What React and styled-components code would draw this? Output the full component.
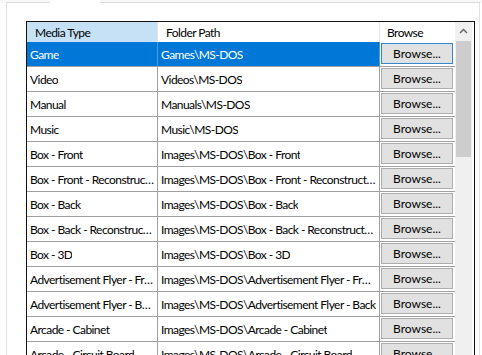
import React from 'react';
import styled, { createGlobalStyle } from 'styled-components';

const GlobalStyle = createGlobalStyle`
    html, body {
        margin: 0;
        padding: 0;
        background: #ffffff;
        overflow: hidden;
    }
    body {
        font-family: "Segoe UI", Lato, "Liberation Sans", sans-serif;
        font-size: 12px;
        letter-spacing: -0.56px;
        color: #000000;
    }
`

const rows = [
    ['Game', 'Games\\MS-DOS'],
    ['Video', 'Videos\\MS-DOS'],
    ['Manual', 'Manuals\\MS-DOS'],
    ['Music', 'Music\\MS-DOS'],
    ['Box - Front', 'Images\\MS-DOS\\Box - Front'],
    ['Box - Front - Reconstructed', 'Images\\MS-DOS\\Box - Front - Reconstructed'],
    ['Box - Back', 'Images\\MS-DOS\\Box - Back'],
    ['Box - Back - Reconstructed', 'Images\\MS-DOS\\Box - Back - Reconstructed'],
    ['Box - 3D', 'Images\\MS-DOS\\Box - 3D'],
    ['Advertisement Flyer - Front', 'Images\\MS-DOS\\Advertisement Flyer - Front'],
    ['Advertisement Flyer - Back', 'Images\\MS-DOS\\Advertisement Flyer - Back'],
    ['Arcade - Cabinet', 'Images\\MS-DOS\\Arcade - Cabinet'],
    ['Arcade - Circuit Board', 'Images\\MS-DOS\\Arcade - Circuit Board'],
];

export default function App() {
    return (
        <Page>
            <GlobalStyle />
            <TabStrip>
                <TabEdge width="44px" />
                <TabGap />
                <TabEdge grow />
            </TabStrip>
            <Panel>
                <Grid>
                    <Table>
                        <HeaderRow>
                            <HeaderCell sorted>Media Type</HeaderCell>
                            <HeaderCell>Folder Path</HeaderCell>
                            <HeaderCell last>Browse</HeaderCell>
                        </HeaderRow>
                        {rows.map(([type, path], i) => (
                            <Row key={type}>
                                <Cell selected={i === 0}><Text>{type}</Text></Cell>
                                <Cell selected={i === 0}><Text>{path}</Text></Cell>
                                <ButtonCell>
                                    <BrowseButton focused={i === 0}>Browse...</BrowseButton>
                                </ButtonCell>
                            </Row>
                        ))}
                    </Table>
                    <ScrollBar>
                        <ArrowButton>
                            <svg width="9" height="6" viewBox="0 0 9 6">
                                <path d="M1 5 L4.5 1.5 L8 5" fill="none" stroke="#606060" strokeWidth="1.4" />
                            </svg>
                        </ArrowButton>
                        <Thumb />
                        <Track />
                    </ScrollBar>
                </Grid>
            </Panel>
        </Page>
    );
}

const Page = styled.div`
    width: 482px;
    height: 355px;
    display: flex;
    flex-direction: column;
    overflow: hidden;
`

const TabStrip = styled.div`
    display: flex;
    height: 3px;
    padding-left: 6px;
    padding-right: 2px;
    background: #f7f7f7;
`

const TabEdge = styled.div`
    width: ${p => p.width || 'auto'};
    flex: ${p => (p.grow ? 1 : 'none')};
    border-bottom: 1px solid #dadada;
`

const TabGap = styled.div`
    width: 50px;
    background: #ffffff;
`

const Panel = styled.div`
    flex: 1;
    margin-left: 6px;
    margin-right: 2px;
    border-left: 1px solid #e3e3e3;
    border-right: 1px solid #e3e3e3;
    padding: 18px 0 0 19px;
    overflow: hidden;
`

const Grid = styled.div`
    width: 447px;
    display: flex;
    border: 1px solid #111111;
    border-bottom: none;
    background: #ffffff;
`

const Table = styled.div`
    width: 428px;
    display: flex;
    flex-direction: column;
`

const HeaderRow = styled.div`
    display: grid;
    grid-template-columns: 131px 222px 75px;
    height: 20px;
`

const HeaderCell = styled.div`
    display: flex;
    align-items: center;
    padding-left: ${p => (p.last ? '7px' : '8px')};
    background: ${p => (p.sorted ? '#c6e0f5' : '#ffffff')};
    border-right: ${p => (p.last ? 'none' : '1px solid #e5e5e5')};
    white-space: nowrap;
`

const Row = styled.div`
    display: grid;
    grid-template-columns: 131px 222px 75px;
    height: 25px;
`

const Cell = styled.div`
    display: flex;
    align-items: center;
    min-width: 0;
    padding: 0 3px 0 3px;
    background: ${p => (p.selected ? '#0078d7' : '#ffffff')};
    color: ${p => (p.selected ? '#ffffff' : '#000000')};
    border-right: 1px solid ${p => (p.selected ? '#4c9be0' : '#a0a0a0')};
    border-bottom: 1px solid #a0a0a0;
`

const Text = styled.span`
    min-width: 0;
    overflow: hidden;
    white-space: nowrap;
    text-overflow: ellipsis;
`

const ButtonCell = styled.div`
    display: flex;
    padding: 1px 2px 2px 1px;
    border-bottom: 1px solid #a0a0a0;
`

const BrowseButton = styled.div`
    flex: 1;
    display: flex;
    align-items: center;
    justify-content: center;
    letter-spacing: 0;
    font-size: 12px;
    background: #e1e1e1;
    border: 1px solid ${p => (p.focused ? '#3d86c6' : '#adadad')};
    box-shadow: inset 0 0 0 1px ${p => (p.focused ? '#cfe3f5' : '#e1e1e1')};
`

const ScrollBar = styled.div`
    width: 17px;
    display: flex;
    flex-direction: column;
    background: #f0f0f0;
`

const ArrowButton = styled.div`
    height: 17px;
    display: flex;
    align-items: center;
    justify-content: center;
`

const Thumb = styled.div`
    height: 116px;
    margin: 2px 1px 0 1px;
    background: #cdcdcd;
`

const Track = styled.div`
    flex: 1;
    height: 300px;
`
